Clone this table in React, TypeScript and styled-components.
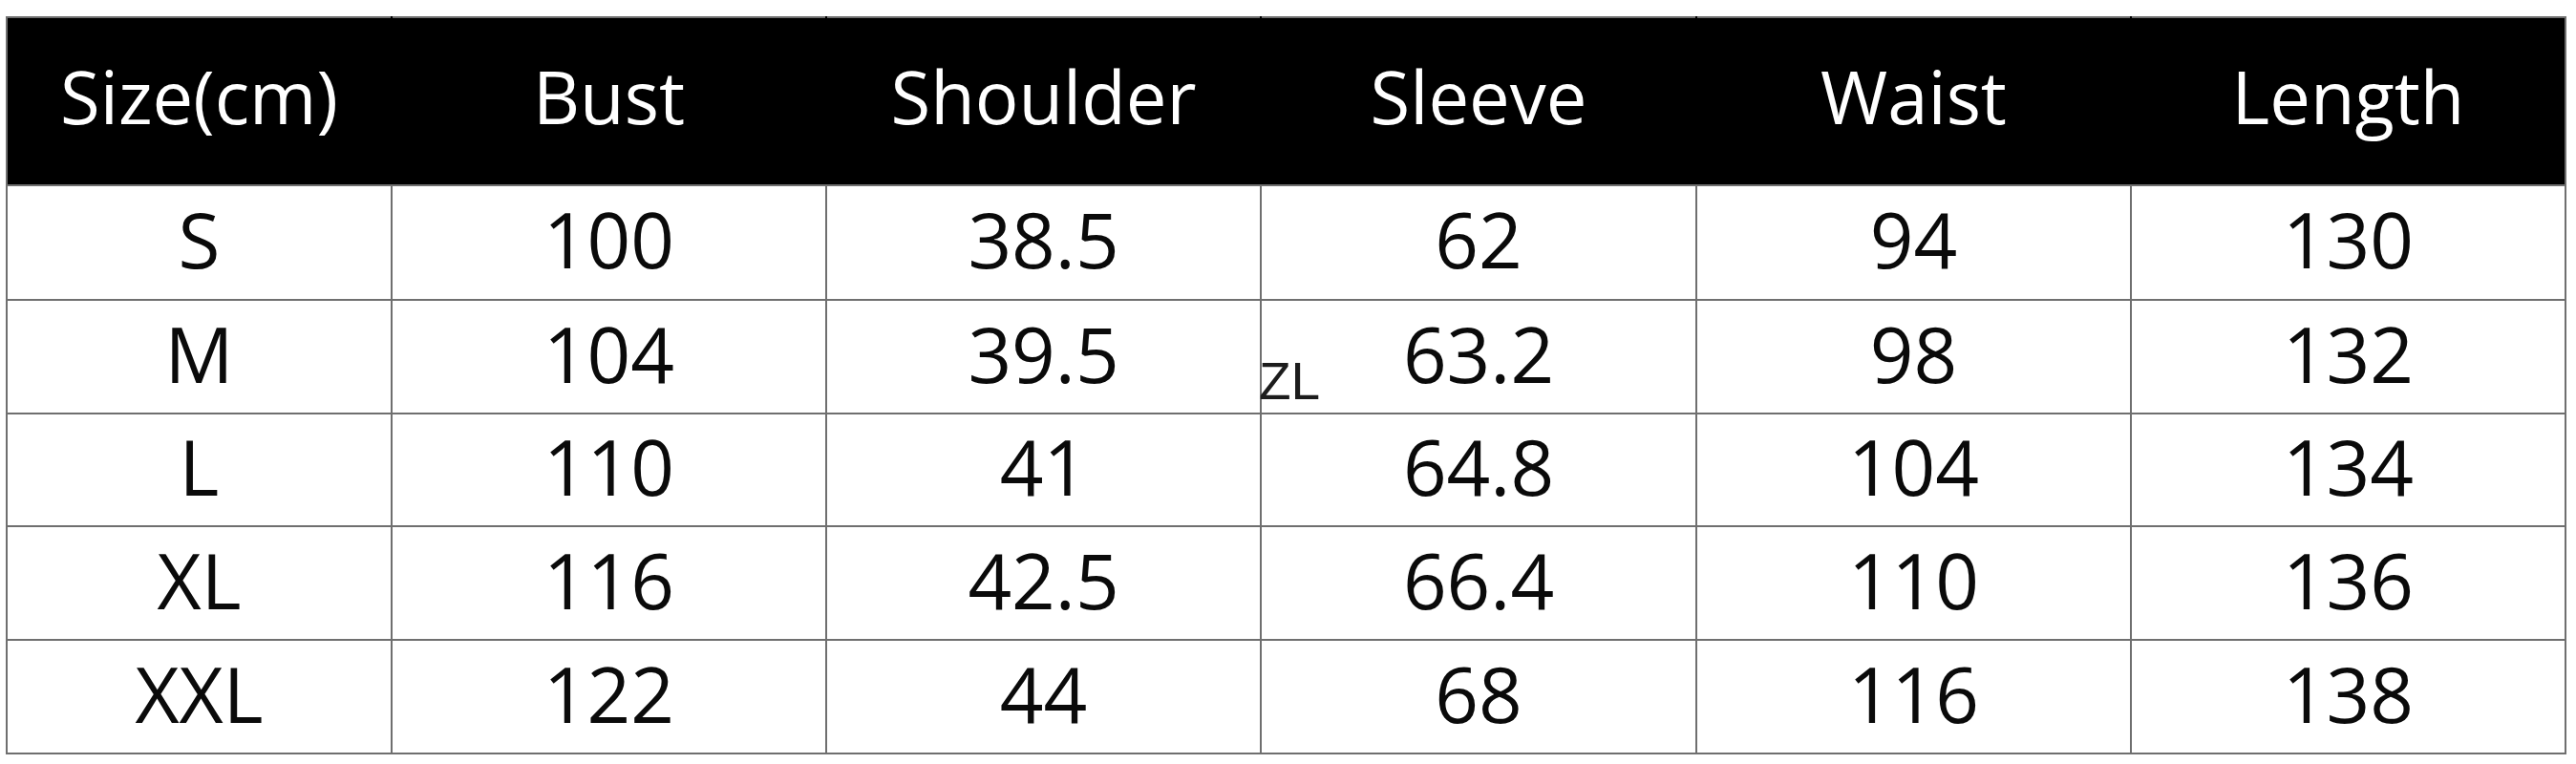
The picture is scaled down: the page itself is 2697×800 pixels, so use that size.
import React from "react";
import styled, { createGlobalStyle } from "styled-components";

const GlobalStyle = createGlobalStyle`
  html, body {
    margin: 0;
    padding: 0;
    background: #ffffff;
  }
  body {
    font-family: "Open Sans", "Noto Sans", sans-serif;
  }
`;

const Page = styled.div`
  position: relative;
  width: 2697px;
  height: 800px;
  padding: 17px 0 0 6px;
  box-sizing: border-box;
  background: #ffffff;
`;

const Table = styled.table`
  border-collapse: collapse;
  table-layout: fixed;
  width: 2681px;
  border: 2px solid #6f6f6f;
  font-family: "Open Sans", "Noto Sans", sans-serif;
`;

const HeadRow = styled.tr`
  height: 176px;
  background: #000000;
`;

const BodyRow = styled.tr<{ $h: number }>`
  height: ${(p) => p.$h}px;
`;

const HeadCell = styled.th`
  padding: 0 0 10px 0;
  background: #000000;
  color: #ffffff;
  font-weight: 400;
  font-size: 76px;
  line-height: 1;
  text-align: center;
  vertical-align: middle;
  border: 2px solid #6f6f6f;
  border-left-color: #000000;
  border-right-color: #000000;
  &:first-child {
    border-left-color: #6f6f6f;
  }
  &:last-child {
    border-right-color: #6f6f6f;
  }
`;

const Cell = styled.td`
  padding: 0 0 8px 0;
  color: #0a0a0a;
  font-size: 80px;
  line-height: 1;
  text-align: center;
  vertical-align: middle;
  border: 2px solid #6f6f6f;
`;

const Mark = styled.span`
  position: absolute;
  left: 1318px;
  top: 372px;
  font-family: "Liberation Sans", Arial, sans-serif;
  font-size: 55px;
  line-height: 1;
  color: #1c1c1c;
  pointer-events: none;
`;

const headers = ["Size(cm)", "Bust", "Shoulder", "Sleeve", "Waist", "Length"];

const rows: { h: number; cells: string[] }[] = [
  { h: 120, cells: ["S", "100", "38.5", "62", "94", "130"] },
  { h: 119, cells: ["M", "104", "39.5", "63.2", "98", "132"] },
  { h: 118, cells: ["L", "110", "41", "64.8", "104", "134"] },
  { h: 119, cells: ["XL", "116", "42.5", "66.4", "110", "136"] },
  { h: 119, cells: ["XXL", "122", "44", "68", "116", "138"] },
];

const widths = [403, 455, 455, 456, 455, 455];

export default function App() {
  return (
    <>
      <GlobalStyle />
      <Page>
        <Table>
          <colgroup>
            {widths.map((w, i) => (
              <col key={i} style={{ width: w }} />
            ))}
          </colgroup>
          <thead>
            <HeadRow>
              {headers.map((h) => (
                <HeadCell key={h}>{h}</HeadCell>
              ))}
            </HeadRow>
          </thead>
          <tbody>
            {rows.map((r) => (
              <BodyRow key={r.cells[0]} $h={r.h}>
                {r.cells.map((c, i) => (
                  <Cell key={i}>{c}</Cell>
                ))}
              </BodyRow>
            ))}
          </tbody>
        </Table>
        <Mark>ZL</Mark>
      </Page>
    </>
  );
}
